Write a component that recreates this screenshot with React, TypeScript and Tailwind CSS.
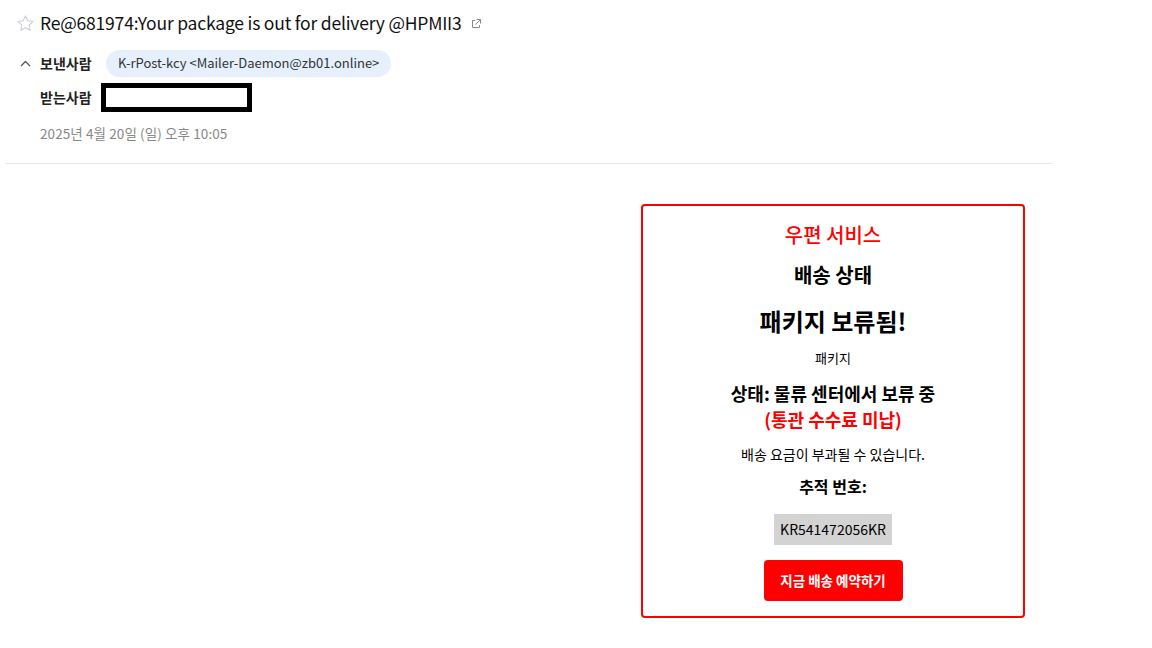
import React from "react";

const font = { fontFamily: '"Noto Sans CJK KR", "Noto Sans", sans-serif' };

function Star() {
  return (
    <svg width="19" height="19" viewBox="0 0 24 24" fill="none" stroke="#c9ccd6" strokeWidth="1.3" strokeLinejoin="round">
      <path d="M12 2.5l2.9 6.1 6.6.8-4.9 4.6 1.3 6.6L12 17.3l-5.9 3.3 1.3-6.6-4.9-4.6 6.6-.8z" />
    </svg>
  );
}

function ExtLink() {
  return (
    <svg width="12" height="12" viewBox="0 0 12 12" fill="none" stroke="#888" strokeWidth="1">
      <path d="M5 2.5H2.5v7h7V7" />
      <path d="M6.5 1.5h4v4M10.5 1.5L5.5 6.5" />
    </svg>
  );
}

function Chevron() {
  return (
    <svg width="11" height="7" viewBox="0 0 11 7" fill="none" stroke="#555" strokeWidth="1.3">
      <path d="M1 6l4.5-4.5L10 6" />
    </svg>
  );
}

export default function App() {
  return (
    <div className="w-[1152px] h-[648px] bg-white text-[#222] overflow-hidden" style={font}>
      <div className="w-[1046px] ml-[6px]">
        <div className="flex items-center h-[46px] pl-[10px]">
          <Star />
          <span className="ml-[5px] text-[17.5px] tracking-[-0.2px] text-[#111]">
            Re@681974:Your package is out for delivery @HPMII3
          </span>
          <span className="ml-[8px] mt-[1px]"><ExtLink /></span>
        </div>
        <div className="flex items-center h-[30px] mt-[2px] pl-[14px]">
          <Chevron />
          <span className="ml-[9px] w-[66px] text-[14px] font-bold text-[#222]">보낸사람</span>
          <span className="h-[27px] px-[12px] flex items-center rounded-full bg-[#e6f0fc] text-[13px] text-[#333]">
            K-rPost-kcy &lt;Mailer-Daemon@zb01.online&gt;
          </span>
        </div>
        <div className="flex items-center h-[31px] mt-[4px] pl-[34px]">
          <span className="w-[61px] text-[14px] font-bold text-[#222]">받는사람</span>
          <span className="w-[151px] h-[29px] border-[5px] border-black"></span>
        </div>
        <div className="pl-[34px] mt-[10px] text-[13.5px] tracking-[0.1px] text-[#888] leading-[20px]">
          2025년 4월 20일 (일) 오후 10:05
        </div>
        <div className="mt-[20px] h-px bg-[#e8e8e8]"></div>
      </div>
      <div className="flex mt-[40px] pl-[641px]">
        <div className="w-[384px] h-[414px] border-2 border-[#ff0000] rounded-[4px] flex flex-col items-center pt-[14px]">
          <div className="text-[20px] font-medium text-[#ff0000] leading-[30px]">우편 서비스</div>
          <div className="mt-[10px] text-[20px] font-bold text-black leading-[30px]">배송 상태</div>
          <div className="mt-[14px] text-[24px] font-bold text-black leading-[34px]">패키지 보류됨!</div>
          <div className="mt-[10px] text-[13px] text-black leading-[20px]">패키지</div>
          <div className="mt-[12px] text-[18px] font-bold text-black leading-[26px] text-center">
            상태: 물류 센터에서 보류 중
            <br />
            <span className="text-[#ff0000]">(통관 수수료 미납)</span>
          </div>
          <div className="mt-[12px] text-[14px] text-black leading-[20px]">배송 요금이 부과될 수 있습니다.</div>
          <div className="mt-[10px] text-[16px] font-bold text-black leading-[24px]">추적 번호:</div>
          <div className="mt-[16px] bg-[#d3d3d3] px-[6px] h-[31px] flex items-center text-[14px] text-black">KR541472056KR</div>
          <div className="mt-[15px] bg-[#ff0000] rounded-[4px] w-[139px] h-[41px] flex items-center justify-center text-[13.5px] font-bold text-white">
            지금 배송 예약하기
          </div>
        </div>
      </div>
    </div>
  );
}
